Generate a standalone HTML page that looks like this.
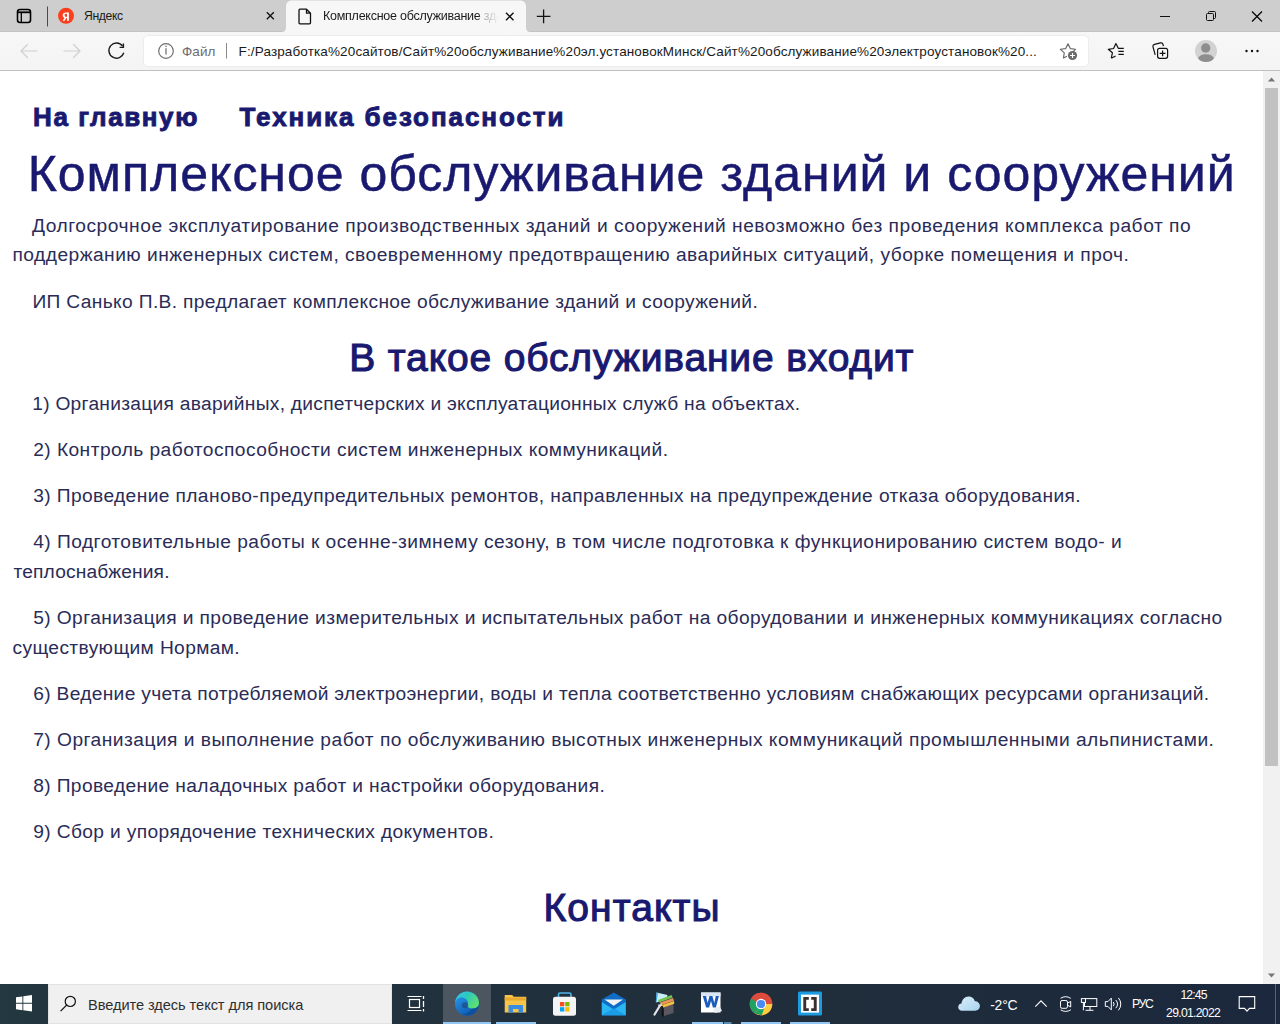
<!DOCTYPE html>
<html lang="ru"><head><meta charset="utf-8">
<title>Комплексное обслуживание зданий и сооружений</title>
<style>
html,body{margin:0;padding:0;width:1280px;height:1024px;overflow:hidden;background:#fff;font-family:"Liberation Sans",sans-serif;}
.a{position:absolute;}
.t{position:absolute;white-space:pre;line-height:1;}
#strip{left:0;top:0;width:1280px;height:31px;background:#cecece;border-bottom:1px solid #c2c2c2;}
#toolbar{left:0;top:32px;width:1280px;height:38px;background:linear-gradient(#f7f7f7,#f4f4f4);}
#tbline{left:0;top:70px;width:1280px;height:1px;background:#c0c0c0;}
#page{left:0;top:71px;width:1263px;height:913px;background:#fff;}
#sb{left:1263px;top:71px;width:17px;height:913px;background:#f1f1f1;}
#taskbar{left:0;top:984px;width:1280px;height:40px;background:linear-gradient(90deg,#23383f 0,#22353f 48px,#21313d 420px,#202d3b 850px,#1d2a3c 1100px,#1b283d 1280px);}
.body{font-size:19.2px;color:#2a2c57;}
.nav{font-size:26px;font-weight:bold;-webkit-text-stroke:0.9px #191970;color:#191970;}
.h1{font-size:50px;-webkit-text-stroke:0.5px #191970;color:#191970;}
.h2{font-size:39px;font-weight:normal;-webkit-text-stroke:1.1px #191970;color:#191970;}
</style></head><body>
<div id="strip" class="a"></div>
<div id="toolbar" class="a"></div>
<div id="tbline" class="a"></div>
<div id="page" class="a"></div>
<div id="sb" class="a"></div>
<div id="taskbar" class="a"></div>

<!-- tab strip -->
<svg class="a" style="left:0;top:0" width="1280" height="32" viewBox="0 0 1280 32">
  <rect x="17.5" y="9.5" width="13" height="13" rx="2.5" fill="none" stroke="#000" stroke-width="1.6"/>
  <line x1="18" y1="12.3" x2="30" y2="12.3" stroke="#000" stroke-width="1.8"/>
  <line x1="21.3" y1="12" x2="21.3" y2="22" stroke="#000" stroke-width="1.3"/>
  <line x1="47.5" y1="6.5" x2="47.5" y2="26.5" stroke="#4a4a4a" stroke-width="1"/>
  <circle cx="66" cy="15.8" r="8" fill="#fc3f1d"/>
  <path fill-rule="evenodd" d="M68.9 12.4H65.9C63.8 12.4 62.7 13.6 62.7 15.3C62.7 16.6 63.4 17.4 64.5 17.9L62.5 20.8H64.6L66.4 18.1H67V20.8H68.9ZM67 13.8V16.8H66.2C65.2 16.8 64.6 16.2 64.6 15.3C64.6 14.3 65.2 13.8 66.2 13.8Z" fill="#fff"/>
  <path d="M266.8 12.3l7 7M273.8 12.3l-7 7" stroke="#111" stroke-width="1.3"/>
  <path d="M281 32 C284.5 32 286 30.5 286 27.5 V6.5 C286 2.5 288.5 0.5 292.5 0.5 H519.5 C523.5 0.5 526 2.5 526 6.5 V27.5 C526 30.5 527.5 32 531 32 Z" fill="#f7f7f7"/>
  <path d="M300 9.2h6.5l4 4v9.6c0 .6-.4 1-1 1h-9.5c-.6 0-1-.4-1-1v-12.6c0-.6.4-1 1-1z M306.5 9.2v4h4" fill="none" stroke="#111" stroke-width="1.3" stroke-linejoin="round"/>
  <path d="M506 12.7l7.5 7.5M513.5 12.7l-7.5 7.5" stroke="#111" stroke-width="1.4"/>
  <path d="M543.6 9.6v13.6M536.8 16.4h13.6" stroke="#111" stroke-width="1.3"/>
  <path d="M1160 16.5h10" stroke="#111" stroke-width="1"/>
  <rect x="1206.5" y="13.5" width="7" height="7" rx="1" fill="none" stroke="#111" stroke-width="1"/>
  <path d="M1208.5 13.5v-1c0-.6.4-1 1-1h5c.6 0 1 .4 1 1v5c0 .6-.4 1-1 1h-1" fill="none" stroke="#111" stroke-width="1"/>
  <path d="M1252 11.5l10 10M1262 11.5l-10 10" stroke="#000" stroke-width="1.15"/>
</svg>
<div id="yx" class="t" style="left:84.0px;top:10.0px;letter-spacing:-0.38px;font-size:12.2px;color:#1a1a1a">Яндекс</div>
<div class="t" style="left:323px;top:10px;font-size:12.5px;color:#1a1a1a;letter-spacing:-0.25px;width:176px;overflow:hidden;-webkit-mask-image:linear-gradient(90deg,#000 155px,rgba(0,0,0,0.35) 162px,transparent 176px)">Комплексное обслуживание зданий</div>

<!-- toolbar -->
<svg class="a" style="left:0;top:31px" width="1280" height="39" viewBox="0 31 1280 39">
  <path d="M21 51h16M21 51l6.5-6.5M21 51l6.5 6.5" fill="none" stroke="#cfcfcf" stroke-width="1.2" stroke-linecap="round"/>
  <path d="M80 51h-16M80 51l-6.5-6.5M80 51l-6.5 6.5" fill="none" stroke="#cfcfcf" stroke-width="1.2" stroke-linecap="round"/>
  <path d="M122.6 46 A7.6 7.6 0 1 0 123.8 52.8" fill="none" stroke="#1a1a1a" stroke-width="1.4"/>
  <path d="M123.4 43.6v3.8h-3.8" fill="none" stroke="#1a1a1a" stroke-width="1.4"/>
  <rect x="143.5" y="35.5" width="945" height="31" rx="4.5" fill="#fff" stroke="#ececec" stroke-width="1"/>
  <circle cx="166" cy="51" r="7.3" fill="none" stroke="#707070" stroke-width="1.2"/>
  <path d="M166 48.2v6.3" stroke="#707070" stroke-width="1.3"/>
  <circle cx="166" cy="46.3" r="0.8" fill="#707070"/>
  <line x1="226.5" y1="43" x2="226.5" y2="58.5" stroke="#8a8a8a" stroke-width="1"/>
  <path d="M1068 43.8L1070.3 48.6L1075.5 49.3L1071.7 52.9M1064.3 52.9L1060.4 49.3L1065.7 48.6L1068 43.8M1064.3 52.9L1063.4 58L1066.5 56.4" fill="none" stroke="#6a6a6a" stroke-width="1.15" stroke-linejoin="round" stroke-linecap="round"/>
  <circle cx="1072.5" cy="55.5" r="4.6" fill="#6a6a6a"/>
  <path d="M1072.5 53v5M1070 55.5h5" stroke="#fff" stroke-width="1.1"/>
  <path d="M1111.3 58.2L1112.4 52.8L1108.3 49.3L1113.6 48.5L1115.9 43.6L1118.3 48.3H1123.8M1118.4 51.3H1123.8M1118.4 54.4H1123.8M1111.3 58.2L1115.6 56" fill="none" stroke="#111" stroke-width="1.2" stroke-linejoin="round"/>
  <path d="M1155.2 54.8L1153 46.8c-.3-1.2.3-2.2 1.5-2.5l6-1.4c1.2-.3 2.2.3 2.5 1.4l.4 1.9" fill="none" stroke="#111" stroke-width="1.2"/>
  <rect x="1157.6" y="48.3" width="10" height="10" rx="2" fill="#f7f7f7" stroke="#111" stroke-width="1.2"/>
  <path d="M1162.6 50.5v5.8M1159.7 53.4h5.8" stroke="#111" stroke-width="1.2"/>
  <circle cx="1206" cy="51" r="11" fill="#d2d2d2"/>
  <clipPath id="av"><circle cx="1206" cy="51" r="11"/></clipPath>
  <g clip-path="url(#av)" fill="#8e8e8e"><circle cx="1205.7" cy="48" r="4.7"/><ellipse cx="1206" cy="58.6" rx="7.8" ry="4.3"/></g>
  <circle cx="1246.5" cy="51" r="1.2" fill="#111"/><circle cx="1252" cy="51" r="1.2" fill="#111"/><circle cx="1257.5" cy="51" r="1.2" fill="#111"/>
</svg>
<div id="ufile" class="t" style="left:182.0px;top:44.5px;letter-spacing:0.068px;font-size:13.5px;color:#6b6b6b">Файл</div>
<div id="url" class="t" style="left:238.6px;top:45.0px;letter-spacing:0.129px;font-size:13.5px;color:#1a1a1a">F:/Разработка%20сайтов/Сайт%20обслуживание%20эл.установокМинск/Сайт%20обслуживание%20электроустановок%20...</div>


<!-- taskbar -->
<svg class="a" style="left:0;top:984px" width="1280" height="40" viewBox="0 984 1280 40">
  <defs>
    <linearGradient id="edg1" x1="0" y1="0" x2="1" y2="0.6"><stop offset="0" stop-color="#3ac6f2"/><stop offset="0.45" stop-color="#2bc9c0"/><stop offset="1" stop-color="#5fe070"/></linearGradient>
    <linearGradient id="edg2" x1="0" y1="0" x2="0.6" y2="1"><stop offset="0" stop-color="#2aa0f0"/><stop offset="1" stop-color="#0f57b0"/></linearGradient>
    <linearGradient id="cld" x1="0" y1="0" x2="1" y2="1"><stop offset="0" stop-color="#d9eefb"/><stop offset="1" stop-color="#a9d3ee"/></linearGradient>
  </defs>
  
  <path d="M16 997.3l6.4-.9v6.4H16zM23.3 996.3l8.7-1.2v7.7h-8.7zM16 1003.8h6.4v6.4l-6.4-.9zM23.3 1003.8H32v7.7l-8.7-1.2z" fill="#fff"/>
  <rect x="48" y="984" width="344" height="40" fill="#f0f0f0"/>
  <rect x="48" y="984" width="344" height="1" fill="#cfcfcf"/>
  <rect x="48.5" y="984.5" width="343" height="39" fill="none" stroke="#e2e2e2" stroke-width="1"/>
  <circle cx="70.3" cy="1001.4" r="5.1" fill="none" stroke="#111" stroke-width="1.2"/>
  <path d="M66.6 1005.1l-6 6" stroke="#111" stroke-width="1.3"/>
  <!-- task view -->
  <path d="M407.5 996.5h14M407.5 1010.5h14" stroke="#fff" stroke-width="1.2"/>
  <rect x="409.5" y="999.5" width="10" height="8" fill="none" stroke="#fff" stroke-width="1.2"/>
  <path d="M423.5 996v3M423.5 1001v6M423.5 1009v2.5" stroke="#fff" stroke-width="1.3"/>
  <!-- edge active -->
  <rect x="443" y="984" width="48" height="40" fill="#4b5661"/>
  <rect x="443" y="1022" width="48" height="2" fill="#90c6f4"/>
  <circle cx="467" cy="1003.8" r="12" fill="url(#edg2)"/>
  <path d="M455.2 1003.5c0-6.6 5.3-11.9 11.8-11.9 6.6 0 12 5.2 12 11.3 0 3.6-2.7 5.7-6.3 5.7-3.6 0-5.6-1.5-5.6-3 0-.8.9-1.3.9-2.6 0-2.8-3-5.4-6.6-5.4-3.4 0-5.7 2.3-6.2 5.9z" fill="url(#edg1)"/>
  <path d="M472.5 1008.6c3.2 0 6.3-1.5 6.3-5.5v.5c0 6.5-4.5 12-11.5 12-2.5 0-4.5-.8-5.5-1.5 2.5.6 5.5-.5 10.7-5.5z" fill="#0d4f9e" opacity="0.85"/>
  <ellipse cx="465" cy="1005.2" rx="3.2" ry="3" fill="#1c4a85" opacity="0.7"/>
  <!-- explorer -->
  <rect x="496" y="1022" width="40" height="2" fill="#90c6f4"/>
  <path d="M504.7 995h7.5l1.5 1.8h12.5v15.6h-21.5z" fill="#f8c54a"/>
  <rect x="504.7" y="997.5" width="21.5" height="3" fill="#e7a92e"/>
  <path d="M508.5 1012.4v-7.5h14.5v7.5h-4.5v-3.5h-5.5v3.5z" fill="#3a8de0"/>
  <!-- store -->
  <path d="M558.5 997.5v-3c0-1 .6-1.5 1.5-1.5h9.5c.9 0 1.5.5 1.5 1.5v3" fill="none" stroke="#4fb3e8" stroke-width="1.6"/>
  <rect x="553" y="996.8" width="23" height="19" rx="2.5" fill="#f4f4f4"/>
  <rect x="560" y="1002" width="4.3" height="4.3" fill="#f25022"/><rect x="565.2" y="1002" width="4.3" height="4.3" fill="#7fba00"/>
  <rect x="560" y="1007.2" width="4.3" height="4.3" fill="#00a4ef"/><rect x="565.2" y="1007.2" width="4.3" height="4.3" fill="#ffb900"/>
  <!-- mail -->
  <path d="M601.8 999.5l12-7 12 7v15.7h-24z" fill="#0f6cc7"/>
  <path d="M604.5 999.5h18.5l-9.3 6.3z" fill="#f2f2f2"/>
  <path d="M601.8 1002l12 7.5 12-7.5v13.2h-24z" fill="#2ab5f3"/>
  <path d="M601.8 1015.2l12-7 12 7z" fill="#1c9be6"/>
  <!-- archive -->
  <path d="M663.5 1006l10-3.5v10.5l-9.5 3z" fill="#5c5862"/>
  <path d="M663.5 1006l-1.5 0.5v10l2 0.5z" fill="#1c1c22"/>
  <path d="M656.5 992.5l11 2.5-1 4.5-10.5 3z" fill="#c9ecf7"/>
  <path d="M656.5 992.5l1.5 0.2-1.5 9.3-.8.3z" fill="#3a9fd8"/>
  <path d="M658 1000l13.5-5 1.2 2.5-13.5 5z" fill="#72c24c"/>
  <path d="M660 1002.5l13-4.5 1 2.7-13 4.6z" fill="#e89358"/>
  <path d="M662 1005l12-4 .3 2.8-11.8 4z" fill="#f6c23e"/>
  <path d="M654.5 1014.5l5.5-9" stroke="#e6e6e6" stroke-width="2.2" stroke-linecap="round"/>
  <path d="M658.5 1004.5l1.5 2.5M661 1003.5l.3 2.5" stroke="#e6dce6" stroke-width="1.3"/>
  <path d="M662.3 1006v10" stroke="#111" stroke-width="1"/>
  <!-- word -->
  <rect x="692" y="1022" width="31" height="2" fill="#90c6f4"/>
  <rect x="724" y="1022" width="7.5" height="2" fill="#5b8ab0"/>
  <path d="M701 992.5h19.5v20h-19.5z" fill="#fff"/>
  <path d="M701 992.5h19.5v4h-19.5z" fill="#d8e6f5"/>
  <path d="M702.8 996h3.3l1.5 7 1.9-7h2.9l1.9 7 1.5-7h3.1l-3 11.5h-3l-1.9-6.6-1.9 6.6h-3z" fill="#1d5cbc"/>
  <path d="M713 1009l6.5-3 2.5 5-7 2z" fill="#e9eef5"/>
  <!-- chrome -->
  <rect x="741" y="1022" width="40" height="2" fill="#90c6f4"/>
  <circle cx="761" cy="1004" r="11.3" fill="#dd4b3e"/>
  <path d="M761 1004L751.2 998.4A11.3 11.3 0 0 0 755.4 1013.8z" fill="#1ea362"/>
  <path d="M761 1004L755.4 1013.8A11.3 11.3 0 0 0 772.3 1004z" fill="#ffcd40"/>
  <path d="M761 1004L751.2 998.4A11.3 11.3 0 0 1 772.3 1004z" fill="#dd4b3e"/>
  <path d="M755.4 1013.8L761 1004 765.5 1004 761.8 1015.3z" fill="#1ea362"/>
  <circle cx="761" cy="1004" r="5.2" fill="#fff"/>
  <circle cx="761" cy="1004" r="4.1" fill="#4a8af4"/>
  <!-- brackets -->
  <rect x="790" y="1022" width="40" height="2" fill="#90c6f4"/>
  <rect x="798" y="991.6" width="24" height="24" rx="1.5" fill="#1d9ae0"/>
  <rect x="801" y="994.6" width="18" height="18" fill="#fff"/>
  <path d="M803.3 997h5.5v2.8h-2.6v8.4h2.6v2.8h-5.5zM816.7 997h-5.5v2.8h2.6v8.4h-2.6v2.8h5.5z" fill="#3b3030"/>
  <!-- tray -->
  <path d="M962 1010.7c-2.5 0-3.8-1.7-3.8-3.7 0-2 1.5-3.5 3.3-3.6.5-4 3.3-7 7-7 3.2 0 5.6 2 6.4 4.8 2.8 0 5 2.1 5 4.8 0 2.6-2.1 4.7-4.8 4.7z" fill="url(#cld)"/>
  <path d="M1035.3 1006.6l5.7-5.8 5.7 5.8" fill="none" stroke="#fff" stroke-width="1.1"/>
  <path d="M1060.6 998.3q5-3.2 10.2 0M1060.6 1009.8q5 3.2 10.2 0" fill="none" stroke="#fff" stroke-width="1"/>
  <rect x="1060.5" y="1000.5" width="7" height="7.8" rx="1.6" fill="none" stroke="#fff" stroke-width="1"/>
  <path d="M1067.5 1003.2l3.2-1.8v5.6l-3.2-1.8" fill="none" stroke="#fff" stroke-width="1"/>
  <rect x="1084.5" y="998.6" width="12.3" height="7.9" fill="none" stroke="#fff" stroke-width="1"/>
  <path d="M1090 1006.5v3.7M1085.5 1010.3h8" stroke="#fff" stroke-width="1"/>
  <rect x="1081.4" y="998.6" width="4.1" height="3.8" fill="#1e2b3c" stroke="#fff" stroke-width="1"/>
  <path d="M1083.4 1002.4v7.9" stroke="#fff" stroke-width="1"/>
  <path d="M1105.3 1001.6h2.6l3.4-3.5v11.8l-3.4-3.5h-2.6z" fill="none" stroke="#fff" stroke-width="1"/>
  <path d="M1113.3 1002a3.3 3.3 0 0 1 0 4.2M1115.8 1000a6.3 6.3 0 0 1 0 8.2M1118.4 997.9a9.3 9.3 0 0 1 0 12.4" fill="none" stroke="#fff" stroke-width="1"/>
  <path d="M1239.2 996.6h15.5v11.8h-5.2l-2.5 2.8-2.5-2.8h-5.3z" fill="none" stroke="#fff" stroke-width="1.1"/>
  <rect x="1275" y="984" width="1" height="40" fill="#59636e"/>
</svg>
<div id="srch" class="t" style="left:88.0px;top:997.5px;letter-spacing:-0.058px;font-size:14.6px;color:#2e2e2e">Введите здесь текст для поиска</div>
<div id="temp" class="t" style="left:990.2px;top:998.0px;letter-spacing:-0.234px;font-size:14px;color:#fff">-2°C</div>
<div id="lang" class="t" style="left:1132.0px;top:998.0px;letter-spacing:-1.3px;font-size:12.2px;color:#fff">РУС</div>
<div id="time" class="t" style="left:1180.4px;top:989.0px;letter-spacing:-0.85px;font-size:12.2px;color:#fff">12:45</div>
<div id="date" class="t" style="left:1166.1px;top:1007.0px;letter-spacing:-0.699px;font-size:12.2px;color:#fff">29.01.2022</div>

<!-- scrollbar -->
<svg class="a" style="left:1263px;top:71px" width="17" height="913" viewBox="0 0 17 913">
  <rect x="2" y="17" width="13" height="678" fill="#c1c1c1"/>
  <path d="M8.5 6.5l3.6 4h-7.2z" fill="#767676"/>
  <path d="M8.5 906.5l3.6-4h-7.2z" fill="#767676"/>
</svg>


<div id="nav1" class="t nav" style="left:33.0px;top:103.5px;letter-spacing:1.602px">На главную</div>
<div id="nav2" class="t nav" style="left:239.6px;top:103.5px;letter-spacing:1.924px">Техника безопасности</div>
<div id="h1" class="t h1" style="left:27.7px;top:149.0px;letter-spacing:0.985px">Комплексное обслуживание зданий и сооружений</div>
<div id="p1a" class="t body" style="left:32.0px;top:215.5px;letter-spacing:0.519px">Долгосрочное эксплуатирование производственных зданий и сооружений невозможно без проведения комплекса работ по</div>
<div id="p1b" class="t body" style="left:12.5px;top:245.0px;letter-spacing:0.468px">поддержанию инженерных систем, своевременному предотвращению аварийных ситуаций, уборке помещения и проч.</div>
<div id="p2" class="t body" style="left:32.4px;top:291.5px;letter-spacing:0.349px">ИП Санько П.В. предлагает комплексное обслуживание зданий и сооружений.</div>
<div id="h2a" class="t h2" style="left:349.3px;top:338.0px;letter-spacing:0.846px">В такое обслуживание входит</div>
<div id="i1" class="t body" style="left:32.2px;top:393.5px;letter-spacing:0.275px">1) Организация аварийных, диспетчерских и эксплуатационных служб на объектах.</div>
<div id="i2" class="t body" style="left:33.2px;top:439.5px;letter-spacing:0.438px">2) Контроль работоспособности систем инженерных коммуникаций.</div>
<div id="i3" class="t body" style="left:33.2px;top:485.5px;letter-spacing:0.384px">3) Проведение планово-предупредительных ремонтов, направленных на предупреждение отказа оборудования.</div>
<div id="i4a" class="t body" style="left:33.2px;top:531.5px;letter-spacing:0.462px">4) Подготовительные работы к осенне-зимнему сезону, в том числе подготовка к функционированию систем водо- и</div>
<div id="i4b" class="t body" style="left:13.5px;top:561.5px;letter-spacing:0.148px">теплоснабжения.</div>
<div id="i5a" class="t body" style="left:33.2px;top:607.5px;letter-spacing:0.403px">5) Организация и проведение измерительных и испытательных работ на оборудовании и инженерных коммуникациях согласно</div>
<div id="i5b" class="t body" style="left:12.5px;top:637.5px;letter-spacing:0.368px">существующим Нормам.</div>
<div id="i6" class="t body" style="left:33.2px;top:683.5px;letter-spacing:0.315px">6) Ведение учета потребляемой электроэнергии, воды и тепла соответственно условиям снабжающих ресурсами организаций.</div>
<div id="i7" class="t body" style="left:33.2px;top:729.5px;letter-spacing:0.474px">7) Организация и выполнение работ по обслуживанию высотных инженерных коммуникаций промышленными альпинистами.</div>
<div id="i8" class="t body" style="left:33.2px;top:775.5px;letter-spacing:0.373px">8) Проведение наладочных работ и настройки оборудования.</div>
<div id="i9" class="t body" style="left:33.2px;top:821.5px;letter-spacing:0.368px">9) Сбор и упорядочение технических документов.</div>
<div id="h2b" class="t h2" style="left:543.4px;top:888.0px;letter-spacing:1.1px">Контакты</div>

</body></html>
